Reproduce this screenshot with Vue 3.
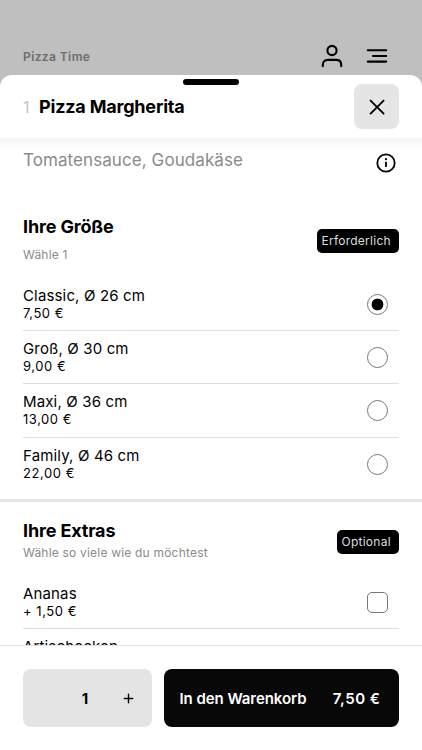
<script setup>
import { ref, computed } from 'vue'

const sizes = [
  { name: 'Classic, Ø 26 cm', price: 7.5 },
  { name: 'Groß, Ø 30 cm', price: 9 },
  { name: 'Maxi, Ø 36 cm', price: 13 },
  { name: 'Family, Ø 46 cm', price: 22 }
]

const extras = [
  { name: 'Ananas', price: 1.5 },
  { name: 'Artischocken', price: 1.5 }
]

const selected = ref(0)
const chosen = ref([])
const amount = ref(1)

const format = (n) => n.toFixed(2).replace('.', ',') + ' €'

const total = computed(() => {
  const extra = chosen.value.reduce((sum, i) => sum + extras[i].price, 0)
  return format((sizes[selected.value].price + extra) * amount.value)
})
</script>

<template>
  <div class="screen">
    <header class="topbar">
      <span class="shop">Pizza Time</span>
      <div class="topbar-icons">
        <svg width="22" height="24" viewBox="0 0 22 24">
          <circle cx="11" cy="6.5" r="4.6" />
          <path d="M1.8 22.2v-1.4c0-3 2-4.9 5-4.9h8.4c3 0 5 1.9 5 4.9v1.4" />
        </svg>
        <svg width="22" height="24" viewBox="0 0 22 24">
          <path d="M1.8 6.3h18.4M7 12h13.2M1.8 17.6h18.4" />
        </svg>
      </div>
    </header>

    <main class="sheet">
      <div class="handle"></div>
      <div class="sheet-header">
        <span class="number">1</span>
        <h1>Pizza Margherita</h1>
        <button class="close" aria-label="Schließen">
          <svg width="16" height="16" viewBox="0 0 16 16">
            <path d="M1.6 1.6l13 13M14.6 1.6l-13 13" />
          </svg>
        </button>
      </div>

      <div class="content">
        <div class="description">
          <p>Tomatensauce, Goudakäse</p>
          <svg class="info" width="20" height="20" viewBox="0 0 20 20">
            <circle cx="10" cy="10" r="8.7" />
            <path class="stem" d="M10 8.8v5.2" />
            <circle class="dot" cx="10" cy="6.2" r="1.1" />
          </svg>
        </div>

        <section class="sizes">
          <div class="section-head">
            <div>
              <h2>Ihre Größe</h2>
              <p class="hint">Wähle 1</p>
            </div>
            <span class="badge required">Erforderlich</span>
          </div>
          <label v-for="(s, i) in sizes" :key="s.name" class="option">
            <div>
              <div class="name">{{ s.name }}</div>
              <div class="price">{{ format(s.price) }}</div>
            </div>
            <input v-model="selected" type="radio" name="size" :value="i">
          </label>
        </section>

        <section class="extras">
          <div class="section-head">
            <div>
              <h2>Ihre Extras</h2>
              <p class="hint">Wähle so viele wie du möchtest</p>
            </div>
            <span class="badge optional">Optional</span>
          </div>
          <label v-for="(e, i) in extras" :key="e.name" class="option">
            <div>
              <div class="name">{{ e.name }}</div>
              <div class="price">+ {{ format(e.price) }}</div>
            </div>
            <input v-model="chosen" type="checkbox" :value="i">
          </label>
        </section>
      </div>

      <footer class="footer">
        <div class="amount">
          <button v-if="amount > 1" @click="amount--">−</button>
          <span v-else></span>
          <strong>{{ amount }}</strong>
          <button @click="amount++">
            <svg class="plus" width="11" height="11" viewBox="0 0 11 11">
              <path d="M5.5 1.3v8.4M1.3 5.5h8.4" />
            </svg>
          </button>
        </div>
        <button class="cart">
          <span class="cart-label">In den Warenkorb</span>
          <span class="cart-total">{{ total }}</span>
        </button>
      </footer>
    </main>
  </div>
</template>

<style>
body {
  background: #bfbfbf;
  overflow: hidden;
}
</style>

<style scoped>
* {
  box-sizing: border-box;
}

.screen {
  height: 100vh;
  display: flex;
  flex-direction: column;
  background: #bfbfbf;
  color: #000;
  font-family: Inter, "Liberation Sans", sans-serif;
}

h1, h2, p {
  margin: 0;
}

button {
  border: none;
  padding: 0;
  font-family: inherit;
  color: inherit;
  cursor: pointer;
}

svg {
  display: block;
  fill: none;
  stroke: #000;
  stroke-width: 2.1;
  stroke-linecap: round;
  stroke-linejoin: round;
}

.topbar {
  flex: none;
  height: 75px;
  padding: 37px 34px 0 23px;
  display: flex;
  align-items: center;
  justify-content: space-between;
}

.shop {
  font-size: 12px;
  font-weight: 600;
  letter-spacing: 0.4px;
  color: #6d6d6d;
}

.topbar-icons {
  display: flex;
  gap: 23px;
}

.sheet {
  flex: 1;
  min-height: 0;
  display: flex;
  flex-direction: column;
  background: #fff;
  border-radius: 12px 12px 0 0;
}

.handle {
  flex: none;
  width: 56px;
  height: 6px;
  margin: 4px auto 0;
  border-radius: 3px;
  background: #000;
}

.sheet-header {
  flex: none;
  height: 53px;
  padding: 0 23px 10px;
  display: flex;
  align-items: center;
}

.number {
  width: 16px;
  font-size: 16px;
  color: #c4c4c4;
}

h1 {
  flex: 1;
  font-size: 18px;
  font-weight: 700;
  letter-spacing: -0.2px;
}

.close {
  width: 45px;
  height: 45px;
  border-radius: 8px;
  background: #e5e5e5;
  display: flex;
  align-items: center;
  justify-content: center;
}

.close svg {
  stroke-width: 1.9;
}

.content {
  flex: 1;
  min-height: 0;
  overflow: hidden;
  background: linear-gradient(#f4f4f4, #fff 11px);
}

.description {
  height: 77px;
  padding: 10px 26px 0 23px;
  display: flex;
  justify-content: space-between;
  align-items: flex-start;
}

.description p {
  font-size: 17px;
  line-height: 24px;
  letter-spacing: 0.08px;
  color: #8a8a8a;
}

.info {
  margin-top: 5px;
  stroke-width: 1.8;
}

.info .stem {
  stroke-linecap: butt;
}

.info .dot {
  fill: #000;
  stroke: none;
}

.sizes {
  height: 287px;
  padding: 0 23px;
  border-bottom: 3px solid #e4e4e4;
}

.section-head {
  height: 62.5px;
  display: flex;
  justify-content: space-between;
  align-items: flex-start;
}

h2 {
  font-size: 18px;
  line-height: 24px;
  font-weight: 700;
  letter-spacing: -0.15px;
}

.hint {
  font-size: 12px;
  line-height: 18px;
  letter-spacing: 0.2px;
  color: #8a8a8a;
}

.sizes .hint {
  margin-top: 7px;
}

.badge {
  height: 24px;
  padding-left: 4.5px;
  border-radius: 5px;
  background: #000;
  color: #ddd;
  font-size: 12px;
  line-height: 24px;
  letter-spacing: 0.25px;
}

.required {
  width: 82px;
  margin-top: 14px;
}

.optional {
  width: 62px;
  margin-top: 11px;
}

.option {
  height: 53.4px;
  padding: 9px 11px 0 0;
  display: flex;
  justify-content: space-between;
  align-items: flex-start;
  border-bottom: 1px solid #dedede;
}

.sizes .option:last-child {
  border-bottom: none;
}

.name {
  font-size: 15px;
  line-height: 18px;
  letter-spacing: 0.15px;
}

.price {
  font-size: 13px;
  line-height: 17px;
  letter-spacing: 0.55px;
}

.option input {
  appearance: none;
  flex: none;
  width: 21px;
  height: 21px;
  margin: 7px 0 0;
  border: 1px solid #777;
  background: #fff;
}

.option input[type='radio'] {
  border-radius: 50%;
}

.option input[type='radio']:checked {
  background: radial-gradient(circle, #000 5.6px, #fff 6.2px);
}

.option input[type='checkbox'] {
  border-radius: 5px;
}

.option input[type='checkbox']:checked {
  background: #000;
}

.extras {
  padding: 17px 23px 0;
}

.extras .section-head {
  height: 56.5px;
}

.extras .hint {
  margin-top: 1px;
}

.footer {
  flex: none;
  height: 105px;
  padding: 23px 23px 0;
  display: flex;
  align-items: flex-start;
  gap: 12px;
  border-top: 1px solid #e2e2e2;
  background: #fff;
}

.amount {
  width: 128.5px;
  height: 58px;
  display: grid;
  grid-template-columns: 40px 44px 43px;
  align-items: center;
  justify-items: center;
  border-radius: 8px;
  background: #e4e4e4;
}

.amount strong {
  font-size: 15px;
  font-weight: 700;
}

.amount button {
  background: none;
  font-size: 15px;
}

.plus {
  stroke-width: 1.4;
}

.cart {
  flex: 1;
  height: 58px;
  padding: 0 18.5px 0 16px;
  display: flex;
  align-items: center;
  justify-content: space-between;
  border-radius: 8px;
  background: #080808;
  color: #fff;
  font-size: 15px;
  font-weight: 600;
}

.cart-label {
  letter-spacing: -0.06px;
}

.cart-total {
  letter-spacing: 0.5px;
}
</style>
